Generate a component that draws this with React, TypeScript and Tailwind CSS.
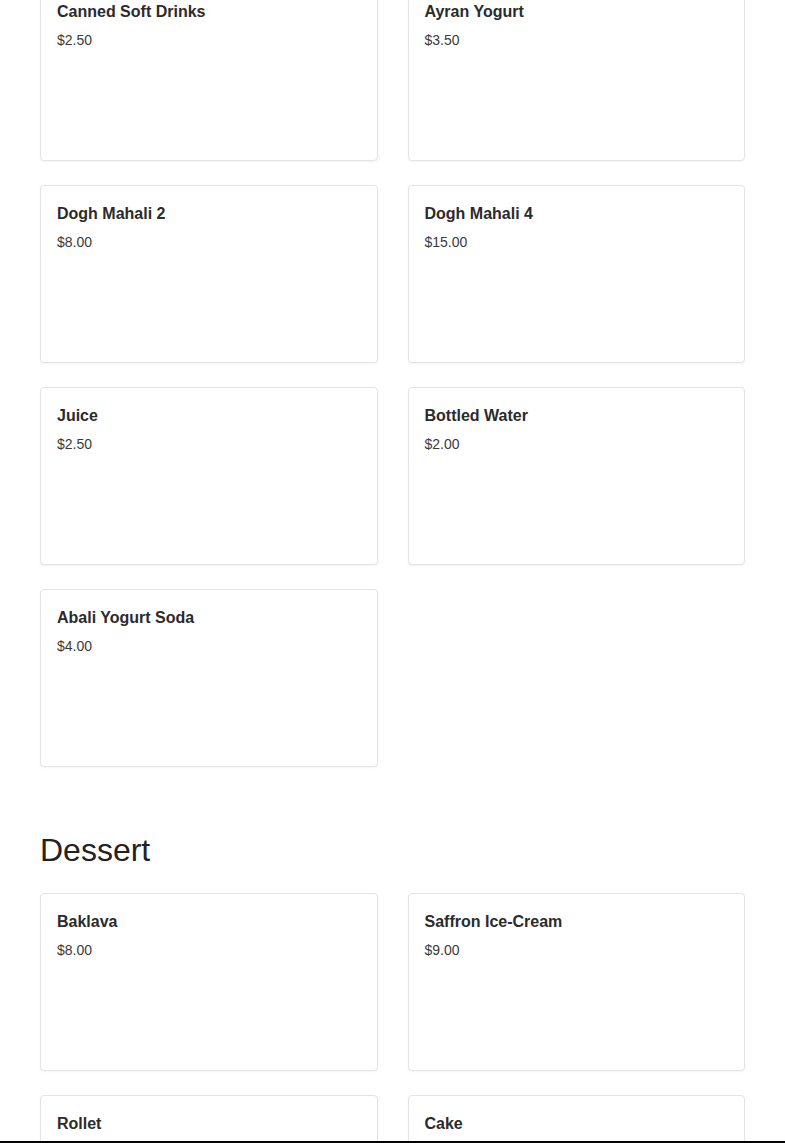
import React from "react";

type Item = {
  name: string;
  price: string;
};

const drinks: Item[] = [
  { name: "Canned Soft Drinks", price: "$2.50" },
  { name: "Ayran Yogurt", price: "$3.50" },
  { name: "Dogh Mahali 2", price: "$8.00" },
  { name: "Dogh Mahali 4", price: "$15.00" },
  { name: "Juice", price: "$2.50" },
  { name: "Bottled Water", price: "$2.00" },
  { name: "Abali Yogurt Soda", price: "$4.00" },
];

const desserts: Item[] = [
  { name: "Baklava", price: "$8.00" },
  { name: "Saffron Ice-Cream", price: "$9.00" },
  { name: "Rollet", price: "$7.00" },
  { name: "Cake", price: "$6.00" },
];

const MenuCard = ({ item }: { item: Item }) => {
  return (
    <div className="h-[178px] rounded border border-[#e4e4e4] bg-white px-4 pt-4 shadow-[0_1px_2px_rgba(0,0,0,0.05)]">
      <h3 className="text-base leading-6 font-bold text-[#2b2b2b]">{item.name}</h3>
      <p className="mt-1.5 text-sm leading-5 text-[#3a3a3a]">{item.price}</p>
    </div>
  );
};

const App = () => {
  return (
    <div
      className="min-h-screen bg-white overflow-hidden"
      style={{ fontFamily: '"Liberation Sans", Arial, sans-serif' }}
    >
      <main className="px-10 -mt-[17px]">
        <section>
          <div className="grid grid-cols-2 gap-x-[30px] gap-y-6">
            {drinks.map((item) => (
              <MenuCard key={item.name} item={item} />
            ))}
          </div>
        </section>
        <section className="mt-16">
          <h2 className="text-[32px] leading-[38px] text-[#222] mb-6">Dessert</h2>
          <div className="grid grid-cols-2 gap-x-[30px] gap-y-6">
            {desserts.map((item) => (
              <MenuCard key={item.name} item={item} />
            ))}
          </div>
        </section>
      </main>
      <div className="fixed bottom-0 left-0 right-0 h-[2px] bg-black" />
    </div>
  );
};

export default App;
